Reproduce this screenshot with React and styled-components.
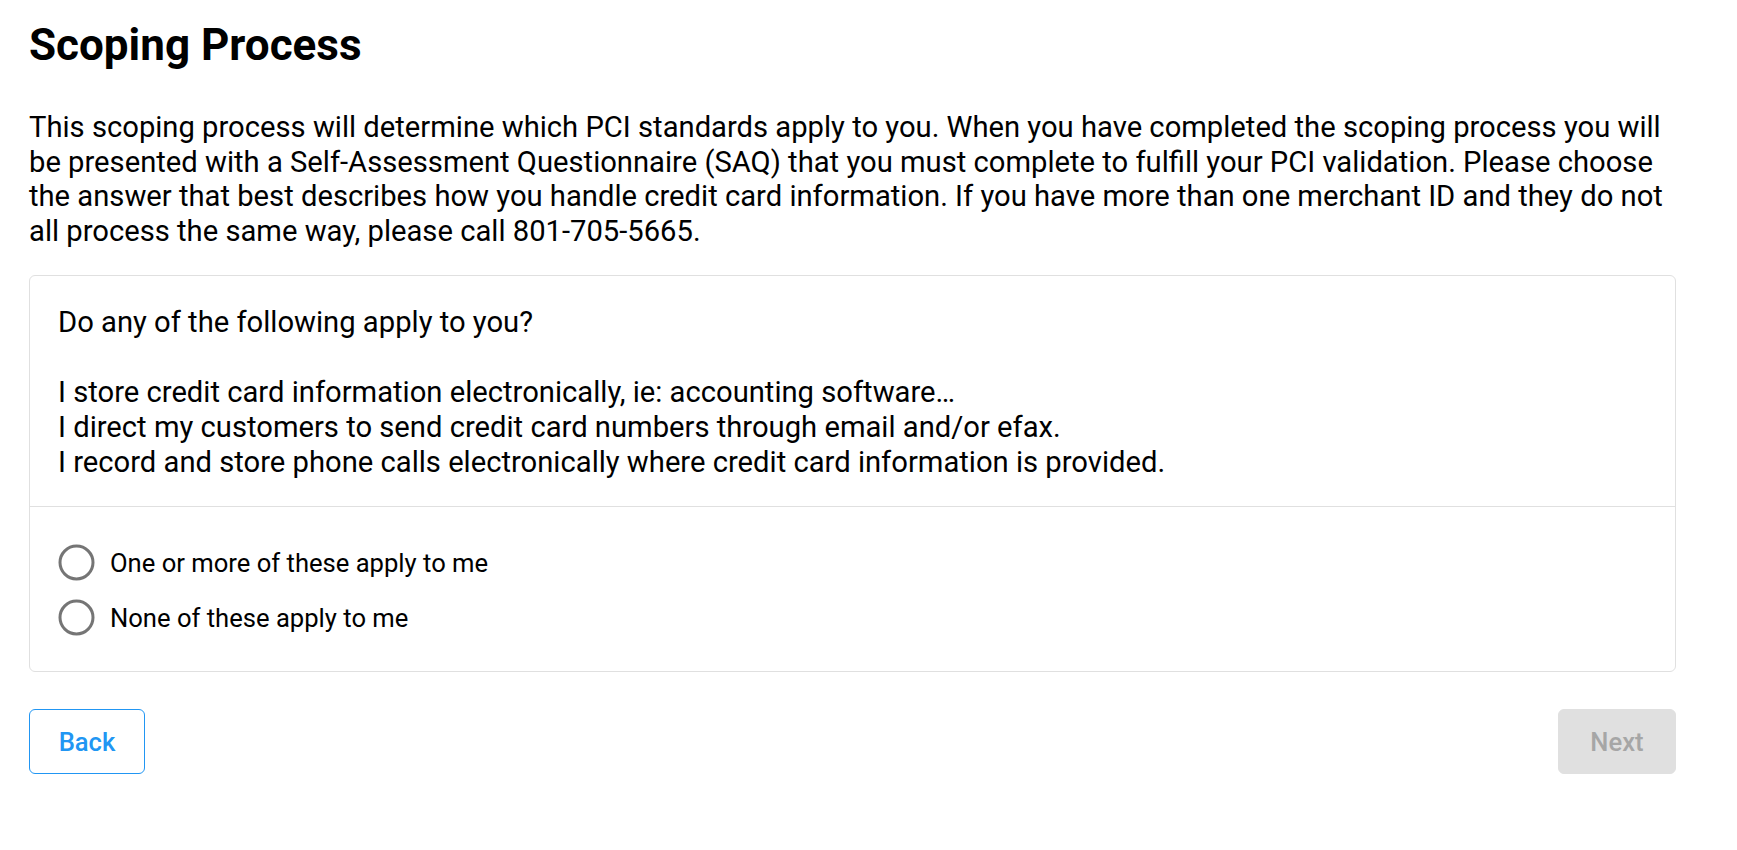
import React, { useState } from 'react'
import styled, { createGlobalStyle } from 'styled-components'

const GlobalStyle = createGlobalStyle`
  body {
    margin: 0;
    background: #fff;
    font-family: Roboto, "Liberation Sans", Arial, sans-serif;
    color: #000;
  }
`

const Page = styled.main`
  width: 1647px;
  padding: 19px 0 40px 29px;
`

const Title = styled.h1`
  margin: 0;
  font-size: 44px;
  line-height: 52px;
  font-weight: 700;
`

const Intro = styled.p`
  margin: 39px 0 0;
  font-size: 29.2px;
  line-height: 34.6px;
`

const Card = styled.section`
  margin-top: 27px;
  border: 1px solid #e0e0e0;
  border-radius: 6px;
  background: #fff;
`

const Question = styled.div`
  padding: 29px 28px 27px;
  font-size: 29.2px;
  line-height: 34.8px;
  white-space: pre-line;
  border-bottom: 1px solid #e0e0e0;
`

const Options = styled.div`
  display: flex;
  flex-direction: column;
  padding: 28px 28px 26px;
`

const Option = styled.label`
  display: flex;
  align-items: center;
  gap: 15px;
  height: 55px;
  font-size: 25.6px;
  cursor: pointer;
`

const HiddenInput = styled.input`
  display: none;
`

const Actions = styled.div`
  display: flex;
  justify-content: space-between;
  margin-top: 37px;
`

const Button = styled.button`
  width: ${p => p.$w}px;
  height: 65px;
  border-radius: 6px;
  font-family: Roboto, "Liberation Sans", Arial, sans-serif;
  font-size: 25.6px;
  font-weight: 500;
  border: 1px solid ${p => (p.$outlined ? '#2196f3' : '#e0e0e0')};
  background: ${p => (p.$outlined ? '#fff' : '#e0e0e0')};
  color: ${p => (p.$outlined ? '#2196f3' : '#a6a6a6')};
  cursor: ${p => (p.disabled ? 'default' : 'pointer')};
`

function RadioIcon({ checked }) {
  return (
    <svg width="37" height="37" viewBox="0 0 37 37">
      <circle cx="18.5" cy="18.5" r="16.5" fill="none" stroke={checked ? '#2196f3' : '#757575'} strokeWidth="3" />
      {checked && <circle cx="18.5" cy="18.5" r="8" fill="#2196f3" />}
    </svg>
  )
}

const questionText = `Do any of the following apply to you?

I store credit card information electronically, ie: accounting software…
I direct my customers to send credit card numbers through email and/or efax.
I record and store phone calls electronically where credit card information is provided.`

const options = ['One or more of these apply to me', 'None of these apply to me']

export default function App() {
  const [choice, setChoice] = useState(null)

  return (
    <>
      <GlobalStyle />
      <Page>
        <Title>Scoping Process</Title>
        <Intro>
          This scoping process will determine which PCI standards apply to you. When you have completed the scoping
          process you will be presented with a Self-Assessment Questionnaire (SAQ) that you must complete to fulfill
          your PCI validation. Please choose the answer that best describes how you handle credit card information. If
          you have more than one merchant ID and they do not all process the same way, please call 801-705-5665.
        </Intro>
        <Card>
          <Question>{questionText}</Question>
          <Options>
            {options.map(opt => (
              <Option key={opt}>
                <HiddenInput type="radio" name="scope" checked={choice === opt} onChange={() => setChoice(opt)} />
                <RadioIcon checked={choice === opt} />
                {opt}
              </Option>
            ))}
          </Options>
        </Card>
        <Actions>
          <Button $outlined $w={116}>Back</Button>
          <Button $w={118} disabled={!choice}>Next</Button>
        </Actions>
      </Page>
    </>
  )
}
